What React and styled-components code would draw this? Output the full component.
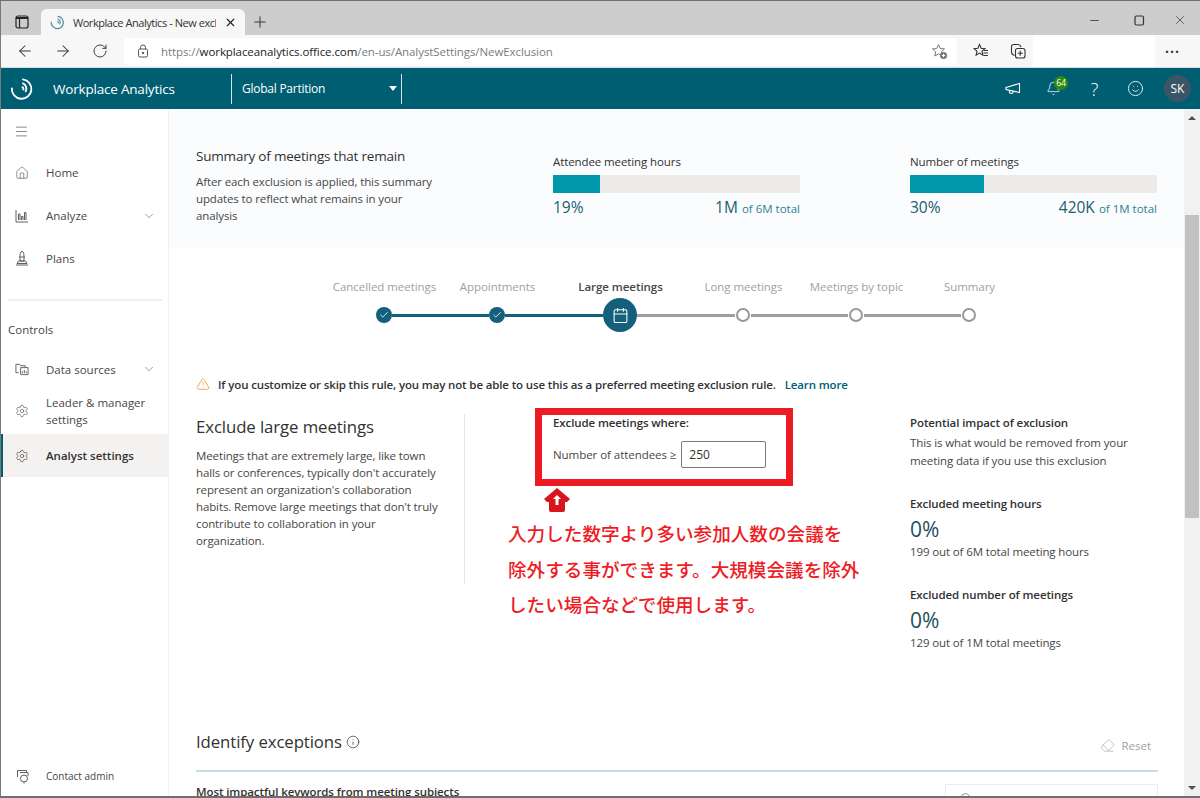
import React from "react";
import styled, { createGlobalStyle } from "styled-components";
import {
  ArrowLeft,
  ArrowRight,
  RotateCw,
  X,
  Plus,
  Minus,
  Eraser,
  Bell,
  Smile,
  Home,
  ChevronDown,
  Settings,
  Info,
  Search,
  AlertTriangle,
  Check,
  Calendar,
  Menu,
} from "lucide-react";

const FONT = `"Open Sans", "Noto Sans", "Liberation Sans", sans-serif`;

const GlobalStyle = createGlobalStyle`
  html, body { margin: 0; padding: 0; background: #fff; }
  body { font-family: ${FONT}; color: #323130; }
  * { box-sizing: border-box; }
`;

const Frame = styled.div`
  width: 1200px;
  height: 798px;
  overflow: hidden;
  display: flex;
  flex-direction: column;
  border-top: 1px solid #6f6f6f;
  border-left: 1px solid #7a7a7a;
  border-bottom: 2px solid #6f6f6f;
`;

/* browser chrome */
const TabStrip = styled.div`
  height: 34px;
  flex: none;
  background: #cdcdcd;
  display: flex;
  align-items: flex-end;
  padding-left: 40px;
  position: relative;
`;

const TabToggle = styled.svg`
  position: absolute;
  left: 14px;
  top: 14px;
`;

const Tab = styled.div`
  width: 204px;
  height: 26px;
  background: #f7f7f7;
  border-radius: 6px 6px 0 0;
  display: flex;
  align-items: center;
  padding: 0 8px 0 9px;
  gap: 8px;
  font-size: 11px;
  color: #333;
`;

const TabTitle = styled.span`
  flex: 1;
  overflow: hidden;
  white-space: nowrap;
  letter-spacing: -0.45px;
`;

const NewTab = styled.div`
  width: 30px;
  height: 26px;
  display: flex;
  align-items: center;
  justify-content: center;
  color: #333;
`;

const WindowButtons = styled.div`
  margin-left: auto;
  height: 34px;
  display: flex;
  align-items: center;
  padding: 4px 2px 0 0;
  color: #333;
`;

const WindowButton = styled.div`
  width: ${(p) => p.$w}px;
  display: flex;
  justify-content: center;
`;

const Toolbar = styled.div`
  height: 33px;
  flex: none;
  background: #f7f7f7;
  display: flex;
  align-items: center;
  padding-left: 15px;
  border-bottom: 1px solid #dcdcdc;
`;

const NavIcon = styled.div`
  width: 38px;
  display: flex;
  color: #333;
`;

const AddressBar = styled.div`
  width: 833px;
  height: 27px;
  margin-left: -6px;
  background: #fff;
  border-radius: 4px;
  display: flex;
  align-items: center;
  padding: 0 9px 0 13px;
  font-size: 11.5px;
  color: #7b7b7b;
  letter-spacing: -0.08px;
`;

const Url = styled.span`
  margin-left: 12px;
  flex: 1;
  white-space: nowrap;
  b {
    font-weight: 400;
    color: #222;
  }
`;

const ToolIcons = styled.div`
  display: flex;
  align-items: center;
  gap: 21px;
  margin-left: 16px;
`;

const WhiteOut = styled.div`
  width: 122px;
  height: 33px;
  margin-left: 7px;
  margin-top: -2px;
  background: #fff;
`;

const More = styled.div`
  margin-left: 10px;
  font-size: 14px;
  font-weight: 700;
  letter-spacing: 1px;
  color: #333;
  line-height: 1;
  margin-top: 2px;
`;

/* app header */
const Header = styled.header`
  height: 41px;
  flex: none;
  background: #005e73;
  color: #fff;
  display: flex;
  align-items: center;
`;

const LogoBox = styled.div`
  width: 52px;
  padding-left: 9px;
  display: flex;
`;

const Brand = styled.div`
  width: 178px;
  font-size: 13.5px;
  letter-spacing: -0.2px;
`;

const Partition = styled.div`
  width: 171px;
  height: 30px;
  border-left: 1px solid #d5e3e7;
  border-right: 1px solid #d5e3e7;
  display: flex;
  align-items: center;
  justify-content: space-between;
  padding: 0 4px 0 10px;
  font-size: 12px;
  letter-spacing: -0.25px;
`;

const Caret = styled.span`
  width: 0;
  height: 0;
  border-left: 4.5px solid transparent;
  border-right: 4.5px solid transparent;
  border-top: 5px solid #fff;
`;

const HeaderIcons = styled.div`
  margin-left: auto;
  display: flex;
  align-items: center;
  padding-right: 9px;
`;

const HeaderIcon = styled.div`
  width: 41px;
  height: 30px;
  display: flex;
  align-items: center;
  justify-content: center;
  position: relative;
  font-size: 18px;
  font-weight: 300;
`;

const Badge = styled.span`
  position: absolute;
  top: 2px;
  left: 21px;
  width: 14px;
  height: 14px;
  border-radius: 50%;
  background: #2c8a0c;
  color: #fff;
  font-size: 9px;
  font-weight: 400;
  line-height: 14px;
  text-align: center;
  letter-spacing: -0.4px;
`;

const Avatar = styled.div`
  width: 27px;
  height: 27px;
  margin-left: 8px;
  border-radius: 50%;
  background: #3c5566;
  font-size: 12px;
  line-height: 27px;
  text-align: center;
`;

/* page */
const Body = styled.div`
  flex: 1;
  min-height: 0;
  display: flex;
`;

const Sidebar = styled.nav`
  width: 168px;
  flex: none;
  border-right: 1px solid #f1f1f1;
  display: flex;
  flex-direction: column;
  padding-top: 14px;
  font-size: 11.5px;
  color: #484644;
`;

const MenuButton = styled.div`
  height: 17px;
  padding-left: 13px;
  margin-bottom: 11px;
  display: flex;
  align-items: center;
  color: #555;
`;

const NavItem = styled.div`
  height: ${(p) => p.$h || 43}px;
  display: flex;
  align-items: center;
  padding: 0 12px 0 14px;
  gap: 17px;
  line-height: 17px;
  ${(p) =>
    p.$active &&
    `
    background: #f3f2f1;
    box-shadow: inset 2px 0 0 #005e73;
    font-weight: 600;
    color: #323130;
  `}
`;

const NavLabel = styled.span`
  flex: 1;
`;

const NavDivider = styled.div`
  height: 2px;
  margin: 20px 6px 21px 7px;
  background: #eeeeee;
`;

const SectionLabel = styled.div`
  padding-left: 7px;
  font-size: 11.5px;
  line-height: 16px;
  margin-bottom: 12px;
`;

const SidebarFoot = styled.div`
  margin-top: auto;
  height: 31px;
  display: flex;
  align-items: flex-start;
  gap: 16px;
  padding: 4px 0 0 15px;
  font-size: 10px;
  line-height: 14px;
`;

const Content = styled.main`
  flex: 1;
  min-width: 0;
  overflow: hidden;
  padding-top: 2px;
  font-size: 11.5px;
`;

const SummaryPanel = styled.section`
  height: 138px;
  background: #fbfcfe;
  display: grid;
  grid-template-columns: 357px 357px 247px;
  padding: 35px 0 0 27px;
`;

const SummaryTitle = styled.h2`
  margin: 0 0 7px;
  font-size: 13.5px;
  line-height: 20px;
  font-weight: 500;
  letter-spacing: -0.2px;
  color: #323130;
`;

const Paragraph = styled.p`
  margin: 0;
  width: ${(p) => p.$w || 250}px;
  line-height: ${(p) => p.$lh || 17.5}px;
  font-size: 11.5px;
  letter-spacing: -0.12px;
  color: #484644;
`;

const Metric = styled.div`
  width: 247px;
  padding-top: 8px;
`;

const MetricLabel = styled.div`
  font-size: 11.5px;
  line-height: 16px;
  font-weight: 500;
  letter-spacing: -0.1px;
  margin-bottom: 5px;
`;

const Track = styled.div`
  height: 18px;
  background: #edebe9;
`;

const Fill = styled.div`
  height: 100%;
  background: #0097ab;
`;

const MetricValues = styled.div`
  display: flex;
  justify-content: space-between;
  align-items: baseline;
  margin-top: 3px;
  font-size: 15.5px;
  font-weight: 500;
  line-height: 22px;
  color: #1c5d70;
  small {
    font-size: 11.5px;
    font-weight: 400;
    color: #2c7f95;
  }
`;

const Steps = styled.div`
  margin: 27px 0 0 159px;
`;

const StepLabels = styled.div`
  display: flex;
  height: 20px;
  align-items: center;
`;

const StepLabel = styled.div`
  width: ${(p) => p.$w}px;
  text-align: center;
  font-size: 11.5px;
  letter-spacing: -0.05px;
  white-space: nowrap;
  font-weight: ${(p) => (p.$current ? 600 : 400)};
  color: ${(p) => (p.$current ? "#484644" : "#a19f9d")};
`;

const StepTrack = styled.div`
  display: flex;
  align-items: center;
  height: 34px;
  margin: 2px 0 0 48px;
`;

const DoneDot = styled.div`
  width: 16px;
  height: 16px;
  flex: none;
  border-radius: 50%;
  background: #135f7c;
  color: #fff;
  display: flex;
  align-items: center;
  justify-content: center;
`;

const CurrentDot = styled.div`
  width: 34px;
  height: 34px;
  flex: none;
  border-radius: 50%;
  background: #135f7c;
  color: #fff;
  display: flex;
  align-items: center;
  justify-content: center;
`;

const TodoDot = styled.div`
  width: 14px;
  height: 14px;
  flex: none;
  margin: 0 1px;
  border-radius: 50%;
  border: 2px solid #999;
  background: #fff;
`;

const Connector = styled.div`
  height: 3px;
  width: ${(p) => p.$w}px;
  flex: none;
  background: ${(p) => (p.$done ? "#135f7c" : "#a19f9d")};
`;

const Warning = styled.div`
  display: flex;
  align-items: center;
  margin: 43px 0 0 27px;
  height: 18px;
  font-size: 11.5px;
  font-weight: 600;
  letter-spacing: -0.14px;
  color: #333;
  gap: 8px;
  white-space: nowrap;
`;

const LearnMore = styled.span`
  color: #005e73;
  margin-left: 1px;
`;

const Exclusion = styled.section`
  display: grid;
  grid-template-columns: 296px 418px 250px;
  margin: 15px 0 0 27px;
  height: 323px;
`;

const ExclusionInfo = styled.div`
  position: relative;
  padding-top: 7px;
`;

const Rule = styled.div`
  position: absolute;
  left: 268px;
  top: 6px;
  height: 170px;
  width: 1px;
  background: #e6e6e6;
`;

const ExclusionTitle = styled.h2`
  margin: 0 0 8px;
  font-size: 16.8px;
  line-height: 24px;
  font-weight: 500;
  letter-spacing: -0.1px;
  color: #323130;
`;

const Middle = styled.div`
  margin-left: 43px;
  position: relative;
`;

const RedBox = styled.div`
  width: 258px;
  height: 78px;
  border: 7px solid #ed1c24;
  padding: 0 0 0 11px;
`;

const FieldTitle = styled.div`
  font-size: 11.5px;
  font-weight: 600;
  line-height: 16px;
  margin-bottom: 10px;
  letter-spacing: -0.1px;
`;

const FieldRow = styled.div`
  display: flex;
  align-items: center;
  gap: 5px;
  font-size: 11.5px;
  letter-spacing: -0.05px;
  color: #484644;
  white-space: nowrap;
`;

const NumberField = styled.div`
  width: 85px;
  height: 27px;
  border: 1px solid #7a7a7a;
  border-radius: 2px;
  padding-left: 7px;
  font-size: 12px;
  line-height: 25px;
  color: #323130;
`;

const ArrowMark = styled.svg`
  display: block;
  margin: 2px 0 0 9px;
`;

const Note = styled.div`
  margin: 3px 0 0 -27px;
  font-family: "Noto Sans CJK JP", sans-serif;
  font-size: 18.6px;
  font-weight: 500;
  line-height: 35.5px;
  color: #ee1c25;
  white-space: nowrap;
`;

const Impact = styled.div`
  padding-top: 7px;
`;

const ImpactTitle = styled.div`
  font-size: 11.5px;
  font-weight: 600;
  line-height: 16px;
  letter-spacing: -0.1px;
  margin-bottom: ${(p) => p.$gap || 0}px;
`;

const ImpactValue = styled.div`
  font-size: 21px;
  line-height: 28px;
  color: #1f4e60;
  margin-top: 3px;
`;

const ImpactBlock = styled.div`
  margin-top: ${(p) => p.$top}px;
`;

const ExceptionsHead = styled.div`
  margin: 0 26px 0 27px;
  height: 41px;
  border-bottom: 2px solid #c5dfe6;
  display: flex;
  align-items: flex-start;
  justify-content: space-between;
`;

const ExceptionsTitle = styled.h2`
  margin: 0;
  display: flex;
  align-items: center;
  gap: 4px;
  font-size: 16.8px;
  line-height: 22px;
  font-weight: 500;
  letter-spacing: -0.1px;
`;

const Reset = styled.div`
  display: flex;
  align-items: center;
  gap: 6px;
  margin: 7px 7px 0 0;
  font-size: 11.5px;
  color: #a19f9d;
`;

const Keywords = styled.div`
  display: flex;
  justify-content: space-between;
  align-items: flex-start;
  margin: 12px 26px 0 27px;
`;

const KeywordsTitle = styled.div`
  font-size: 11.5px;
  font-weight: 600;
  line-height: 16px;
  letter-spacing: -0.1px;
`;

const SearchBox = styled.div`
  width: 213px;
  height: 32px;
  border: 1px solid #e3eff3;
  display: flex;
  align-items: flex-start;
  gap: 6px;
  padding: 7px 0 0 14px;
  font-size: 11.5px;
  color: #605e5c;
`;

/* scrollbar on the right */
const ScrollBar = styled.div`
  width: 16px;
  flex: none;
  background: #f1f1f1;
  display: flex;
  flex-direction: column;
  align-items: stretch;
`;

const ScrollArrow = styled.div`
  height: 17px;
  display: flex;
  align-items: center;
  justify-content: center;
  &::after {
    content: "";
    border-left: 4px solid transparent;
    border-right: 4px solid transparent;
    ${(p) => (p.$down ? "border-top: 4px solid #505050;" : "border-bottom: 4px solid #505050;")}
  }
`;

const ScrollThumb = styled.div`
  height: 303px;
  margin: 89px 1px 0;
  background: #c1c1c1;
`;

const ScrollSpace = styled.div`
  flex: 1;
`;

function Logo({ size = 26, color = "#fff", width = 2 }) {
  return (
    <svg width={size} height={size} viewBox="0 0 26 26" fill="none" stroke={color} strokeWidth={width} strokeLinecap="round">
      <path d="M14 2.5a10.600 10.600 0 1 1-12 9.800" />
      <path d="M14 7a6 6 0 0 1 3 8.500" />
      <path d="M13.500 11a2.200 2.200 0 0 1 1 2.500" />
    </svg>
  );
}

function AnalyzeIcon() {
  return (
    <svg width="14" height="14" viewBox="0 0 14 14" fill="none" stroke="#605e5c" strokeWidth="1">
      <path d="M1 1v12h12" />
      <path d="M3.500 11V5h1.500v6M6.500 11V7.500H8V11M9.500 11V3.500H11V11" />
    </svg>
  );
}

function PlansIcon() {
  return (
    <svg width="14" height="16" viewBox="0 0 14 16" fill="none" stroke="#605e5c" strokeWidth="1">
      <path d="M5 6.500C5 4 5.500 2 7 1c1.500 1 2 3 2 5.500V11H5z" />
      <path d="M4 7h6M3.500 11h7L12 13.500H2z" />
      <path d="M1 15h12" />
    </svg>
  );
}

function DataIcon() {
  return (
    <svg width="14" height="14" viewBox="0 0 15 14" fill="none" stroke="#605e5c" strokeWidth="1">
      <path d="M1 11V2h4l1 1.500h5V5" />
      <path d="M1 11h3" />
      <path d="M6 5.500h8V13H6z" />
      <path d="M8 11.500v-2M10 11.500V8M12 11.500V9.500" />
    </svg>
  );
}

function ContactIcon() {
  return (
    <svg width="14" height="15" viewBox="0 0 14 15" fill="none" stroke="#605e5c" strokeWidth="1">
      <path d="M1.500 8V1.500h9V4" />
      <path d="M4 3.500h8V7" />
      <circle cx="8" cy="9.500" r="3.500" />
      <path d="M8 13v1.500" />
    </svg>
  );
}

function PadlockIcon() {
  return (
    <svg width="12" height="14" viewBox="0 0 12 14" fill="none" stroke="#555" strokeWidth="1">
      <rect x="1.500" y="5" width="9" height="8" rx="1.500" />
      <path d="M3.500 5V3.500a2.500 2.500 0 0 1 5 0V5" />
      <circle cx="6" cy="9" r="0.800" fill="#555" />
    </svg>
  );
}

function StarPlusIcon() {
  return (
    <svg width="17" height="17" viewBox="0 0 17 17" fill="none" stroke="#777" strokeWidth="1">
      <path d="M7.500 1.500l1.800 4 4.200.4-3.200 2.900.9 4.200-3.700-2.200-3.700 2.200.9-4.200L1.500 5.900l4.200-.4z" />
      <circle cx="12.500" cy="12.500" r="3.500" fill="#777" stroke="none" />
      <path d="M12.500 10.800v3.400M10.800 12.500h3.400" stroke="#fff" />
    </svg>
  );
}

function FavoritesIcon() {
  return (
    <svg width="16" height="16" viewBox="0 0 16 16" fill="none" stroke="#333" strokeWidth="1.100">
      <path d="M6.500 1.500l1.600 3.700 3.900.4-3 2.600.9 4-3.400-2.100-3.400 2.100.9-4-3-2.600 3.900-.4z" />
      <path d="M10.500 7.500h4.500M10.500 10h4.500M10.500 12.500h4.500" />
    </svg>
  );
}

function CollectionsIcon() {
  return (
    <svg width="16" height="16" viewBox="0 0 16 16" fill="none" stroke="#333" strokeWidth="1.100">
      <path d="M4.500 12.500C3 12 1.500 11 1.500 9V3.500a2 2 0 0 1 2-2H8c1.500 0 2.500 1 3 2.500" />
      <rect x="5.500" y="5.500" width="9.500" height="9.500" rx="2" />
      <path d="M10.200 7.800v5M7.800 10.200h5" />
    </svg>
  );
}

function MegaphoneIcon() {
  return (
    <svg width="16" height="13" viewBox="0 0 16 13" fill="none" stroke="#fff" strokeWidth="1.100">
      <path d="M1 5.500L14.500 1.500v9L1 7.500z" />
      <path d="M4.500 8.300v2a1 1 0 0 0 1 1h1.500a1 1 0 0 0 1-1v-1" />
    </svg>
  );
}

function TabToggleIcon() {
  return (
    <TabToggle width="14" height="14" viewBox="0 0 14 14" fill="none" stroke="#222" strokeWidth="1.200">
      <rect x="1" y="1" width="12" height="12" rx="2" />
      <path d="M1 3.500h12M1 2.500h12M4.500 4v9" />
    </TabToggle>
  );
}

const STEPS = [
  { label: "Cancelled meetings", w: 113 },
  { label: "Appointments", w: 113 },
  { label: "Large meetings", w: 133, current: true },
  { label: "Long meetings", w: 113 },
  { label: "Meetings by topic", w: 113 },
  { label: "Summary", w: 113 },
];

function Stepper() {
  return (
    <Steps>
      <StepLabels>
        {STEPS.map((s) => (
          <StepLabel key={s.label} $w={s.w} $current={s.current}>
            {s.label}
          </StepLabel>
        ))}
      </StepLabels>
      <StepTrack>
        <DoneDot><Check size={10} strokeWidth={2} /></DoneDot>
        <Connector $w={97} $done />
        <DoneDot><Check size={10} strokeWidth={2} /></DoneDot>
        <Connector $w={98} $done />
        <CurrentDot><Calendar size={17} strokeWidth={1.5} /></CurrentDot>
        <Connector $w={98} />
        <TodoDot />
        <Connector $w={97} />
        <TodoDot />
        <Connector $w={97} />
        <TodoDot />
      </StepTrack>
    </Steps>
  );
}

function MetricBar({ label, pct, value, total }) {
  return (
    <Metric>
      <MetricLabel>{label}</MetricLabel>
      <Track>
        <Fill style={{ width: pct + "%" }} />
      </Track>
      <MetricValues>
        <span>{pct}%</span>
        <span>
          {value} <small>of {total} total</small>
        </span>
      </MetricValues>
    </Metric>
  );
}

export default function App() {
  return (
    <>
      <GlobalStyle />
      <Frame>
        <TabStrip>
          <TabToggleIcon />
          <Tab>
            <Logo size={15} color="#4a8aa0" width={2} />
            <TabTitle>Workplace Analytics - New exclu</TabTitle>
            <X size={13} color="#222" strokeWidth={2} />
          </Tab>
          <NewTab>
            <Plus size={18} strokeWidth={1.3} />
          </NewTab>
          <WindowButtons>
            <WindowButton $w={45}><Minus size={13} strokeWidth={1.5} /></WindowButton>
            <WindowButton $w={45}>
              <svg width="11" height="11" viewBox="0 0 11 11" fill="none" stroke="#333" strokeWidth="1.200">
                <rect x="1" y="1" width="8.500" height="9" rx="1.500" />
              </svg>
            </WindowButton>
            <WindowButton $w={36}><X size={14} strokeWidth={1.2} /></WindowButton>
          </WindowButtons>
        </TabStrip>
        <Toolbar>
          <NavIcon><ArrowLeft size={18} strokeWidth={1.4} /></NavIcon>
          <NavIcon><ArrowRight size={18} strokeWidth={1.4} /></NavIcon>
          <NavIcon><RotateCw size={16} strokeWidth={1.4} /></NavIcon>
          <AddressBar>
            <PadlockIcon />
            <Url>
              https://<b>workplaceanalytics.office.com</b>/en-us/AnalystSettings/NewExclusion
            </Url>
            <StarPlusIcon />
          </AddressBar>
          <ToolIcons>
            <FavoritesIcon />
            <CollectionsIcon />
          </ToolIcons>
          <WhiteOut />
          <More>···</More>
        </Toolbar>
        <Header>
          <LogoBox><Logo size={24} /></LogoBox>
          <Brand>Workplace Analytics</Brand>
          <Partition>
            Global Partition
            <Caret />
          </Partition>
          <HeaderIcons>
            <HeaderIcon><MegaphoneIcon /></HeaderIcon>
            <HeaderIcon>
              <Bell size={15} strokeWidth={1.2} />
              <Badge>64</Badge>
            </HeaderIcon>
            <HeaderIcon>?</HeaderIcon>
            <HeaderIcon><Smile size={17} strokeWidth={1.2} /></HeaderIcon>
            <Avatar>SK</Avatar>
          </HeaderIcons>
        </Header>
        <Body>
          <Sidebar>
            <MenuButton><Menu size={15} strokeWidth={1.1} /></MenuButton>
            <NavItem>
              <Home size={14} strokeWidth={1} />
              <NavLabel>Home</NavLabel>
            </NavItem>
            <NavItem>
              <AnalyzeIcon />
              <NavLabel>Analyze</NavLabel>
              <ChevronDown size={14} strokeWidth={0.9} />
            </NavItem>
            <NavItem $h={42}>
              <PlansIcon />
              <NavLabel>Plans</NavLabel>
            </NavItem>
            <NavDivider />
            <SectionLabel>Controls</SectionLabel>
            <NavItem $h={38}>
              <DataIcon />
              <NavLabel>Data sources</NavLabel>
              <ChevronDown size={14} strokeWidth={0.9} />
            </NavItem>
            <NavItem $h={46}>
              <Settings size={14} strokeWidth={1} />
              <NavLabel>Leader &amp; manager settings</NavLabel>
            </NavItem>
            <NavItem $active>
              <Settings size={14} strokeWidth={1} />
              <NavLabel>Analyst settings</NavLabel>
            </NavItem>
            <SidebarFoot>
              <ContactIcon />
              Contact admin
            </SidebarFoot>
          </Sidebar>
          <Content>
            <SummaryPanel>
              <div>
                <SummaryTitle>Summary of meetings that remain</SummaryTitle>
                <Paragraph $w={240} $lh={17}>
                  After each exclusion is applied, this summary updates to reflect what remains in your analysis
                </Paragraph>
              </div>
              <MetricBar label="Attendee meeting hours" pct={19} value="1M" total="6M" />
              <MetricBar label="Number of meetings" pct={30} value="420K" total="1M" />
            </SummaryPanel>
            <Stepper />
            <Warning>
              <AlertTriangle size={14} color="#e8a33d" strokeWidth={1.5} />
              <span>If you customize or skip this rule, you may not be able to use this as a preferred meeting exclusion rule.</span>
              <LearnMore>Learn more</LearnMore>
            </Warning>
            <Exclusion>
              <ExclusionInfo>
                <Rule />
                <ExclusionTitle>Exclude large meetings</ExclusionTitle>
                <Paragraph $w={248} $lh={17}>
                  Meetings that are extremely large, like town halls or conferences, typically don't accurately represent an organization's collaboration habits. Remove large meetings that don't truly contribute to collaboration in your organization.
                </Paragraph>
              </ExclusionInfo>
              <Middle>
                <RedBox>
                  <FieldTitle>Exclude meetings where:</FieldTitle>
                  <FieldRow>
                    Number of attendees ≥
                    <NumberField>250</NumberField>
                  </FieldRow>
                </RedBox>
                <ArrowMark width="26" height="24" viewBox="0 0 26 24">
                  <path d="M13 0L26 11l-3 3h-2v8a2 2 0 0 1-2 2H7a2 2 0 0 1-2-2v-8H3L0 11z" fill="#d8141c" />
                  <path d="M13 7l4 4h-2.500v6h-3v-6H9z" fill="#fff" />
                </ArrowMark>
                <Note>
                  入力した数字より多い参加人数の会議を
                  <br />
                  除外する事ができます。大規模会議を除外
                  <br />
                  したい場合などで使用します。
                </Note>
              </Middle>
              <Impact>
                <ImpactTitle $gap={3}>Potential impact of exclusion</ImpactTitle>
                <Paragraph $w={230} $lh={18}>
                  This is what would be removed from your meeting data if you use this exclusion
                </Paragraph>
                <ImpactBlock $top={26}>
                  <ImpactTitle>Excluded meeting hours</ImpactTitle>
                  <ImpactValue>0%</ImpactValue>
                  <Paragraph $w={240}>199 out of 6M total meeting hours</Paragraph>
                </ImpactBlock>
                <ImpactBlock $top={26}>
                  <ImpactTitle>Excluded number of meetings</ImpactTitle>
                  <ImpactValue>0%</ImpactValue>
                  <Paragraph $w={240}>129 out of 1M total meetings</Paragraph>
                </ImpactBlock>
              </Impact>
            </Exclusion>
            <ExceptionsHead>
              <ExceptionsTitle>
                Identify exceptions
                <Info size={14} strokeWidth={1.2} />
              </ExceptionsTitle>
              <Reset>
                <Eraser size={15} strokeWidth={1} />
                Reset
              </Reset>
            </ExceptionsHead>
            <Keywords>
              <KeywordsTitle>Most impactful keywords from meeting subjects</KeywordsTitle>
              <SearchBox>
                <Search size={12} strokeWidth={1.3} />
                Search for a keyword
              </SearchBox>
            </Keywords>
          </Content>
          <ScrollBar>
            <ScrollArrow />
            <ScrollThumb />
            <ScrollSpace />
            <ScrollArrow $down />
          </ScrollBar>
        </Body>
      </Frame>
    </>
  );
}
